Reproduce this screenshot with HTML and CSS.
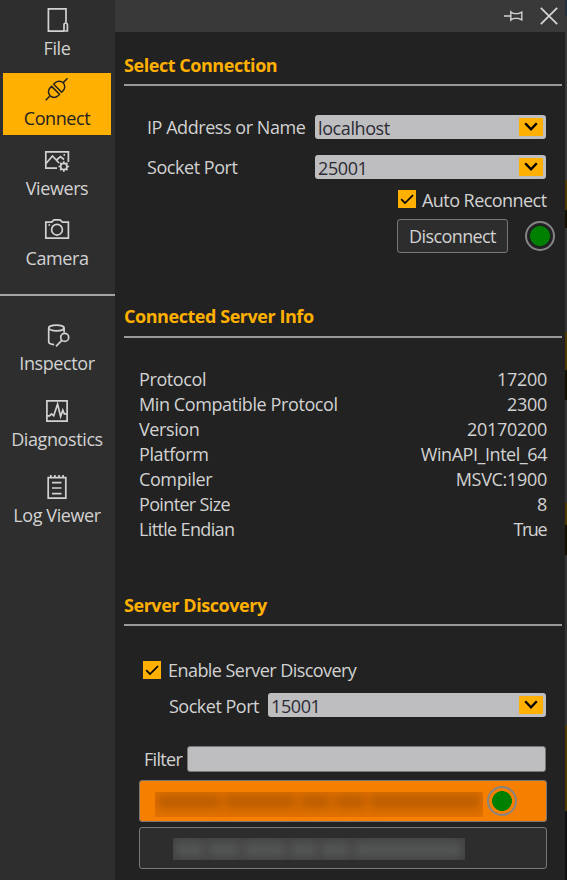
FILE: index.html
```html
<!DOCTYPE html>
<html lang="en">
<head>
<meta charset="utf-8">
<title>Connect</title>
<link rel="stylesheet" href="styles.css">
</head>
<body>
<div class="app">
  <nav class="sidebar">
    <div class="nav-group">
      <a class="nav-item">
        <svg class="icon" viewBox="0 0 30 24"><path d="M24 14.5V.9H6.4v22.2H22"/><path d="M22 23V17q0-2 1.7-2t1.7 2v6z"/></svg>
        <span>File</span>
      </a>
      <a class="nav-item active">
        <svg class="icon" viewBox="0 0 30 24"><g transform="translate(14.6 11.3) rotate(-45)"><path d="M-1.5-5.6V5.6H-3.6A5.6 5.6 0 0 1-3.6-5.6zM1.5-5.6V5.6H3.6A5.6 5.6 0 0 0 3.6-5.6zM-9.4 0H-15.5M9.4 0H15.5"/></g></svg>
        <span>Connect</span>
      </a>
      <a class="nav-item">
        <svg class="icon" viewBox="0 0 30 24"><path d="M26.4 14V3.8H3.8V20.2H15"/><path d="M4 15.5L10.5 8l6.5 7M14.5 12l4-3.5 3.5 3M21.5 6.8h1.5"/><circle cx="21.8" cy="18.5" r="3.2"/><path d="M21.8 15.2v-2M21.8 21.8v2M18.5 18.5h-2M25.1 18.5h2M19.5 16.2l-1.4-1.4M24.1 20.8l1.4 1.4M24.1 16.2l1.4-1.4M19.5 20.8l-1.4 1.4"/></svg>
        <span>Viewers</span>
      </a>
      <a class="nav-item">
        <svg class="icon" viewBox="0 0 30 24"><path d="M3.8 4.1H9.6L12 1.9H18L20.4 4.1H26.4V20.2H3.8z"/><circle cx="15" cy="11.7" r="5.4"/><path d="M6.5 7h1.6"/></svg>
        <span>Camera</span>
      </a>
    </div>
    <div class="nav-group tools">
      <a class="nav-item">
        <svg class="icon" viewBox="0 0 30 24"><ellipse cx="14.4" cy="5" rx="7.7" ry="2.9"/><path d="M6.7 5V19q0 2 5.5 2.7M22.1 5v4.5"/><circle cx="22.7" cy="14.4" r="4"/><path d="M19.8 17.4L14 23.3"/></svg>
        <span>Inspector</span>
      </a>
      <a class="nav-item">
        <svg class="icon" viewBox="0 0 30 24"><path d="M4.9 1.9H25.1V22.1H4.9z"/><path d="M5 16.8h2.5l2-2 2.2 2L15.6 5l3 12.5 2.2-6.3 1.5 3.6H25"/></svg>
        <span>Diagnostics</span>
      </a>
      <a class="nav-item">
        <svg class="icon" viewBox="0 0 30 24"><path d="M6.2 2.6H23.8V23.1H6.2z"/><path d="M10 7.7h9.5M10 13h9.5M10 18.7h9.5M8.8 0v3M12.9 0v3M17 0v3M21.1 0v3"/></svg>
        <span>Log Viewer</span>
      </a>
    </div>
  </nav>

  <main class="panel">
    <header class="panel-bar">
      <svg class="pin" viewBox="0 0 20 12"><path d="M0 6H6.5M6.8 .8V11.2M6.8 2.5L10.5 3.6H14.3L17.8 2V10L14.3 8.4H10.5L6.8 9.5"/></svg>
      <svg class="close" viewBox="0 0 18 18"><path d="M.8.8L17.2 17.2M17.2.8L.8 17.2"/></svg>
    </header>

    <section class="select">
      <h2>Select Connection</h2>
      <div class="connection">
        <label>IP Address or Name</label>
        <div class="combo"><span>localhost</span><i><svg viewBox="0 0 24 18"><path d="M6.2 5.2L12 11.4L17.8 5.2"/></svg></i></div>
        <label>Socket Port</label>
        <div class="combo"><span>25001</span><i><svg viewBox="0 0 24 18"><path d="M6.2 5.2L12 11.4L17.8 5.2"/></svg></i></div>
      </div>
      <div class="check auto"><svg viewBox="0 0 18 18"><path d="M3.2 9.2L7 13L15 5.2"/></svg><span>Auto Reconnect</span></div>
      <div class="actions"><button>Disconnect</button><b class="led"></b></div>
    </section>

    <section class="info">
      <h2>Connected Server Info</h2>
      <dl>
        <dt>Protocol</dt><dd>17200</dd>
        <dt>Min Compatible Protocol</dt><dd>2300</dd>
        <dt>Version</dt><dd>20170200</dd>
        <dt>Platform</dt><dd class="tight">WinAPI_Intel_64</dd>
        <dt>Compiler</dt><dd>MSVC:1900</dd>
        <dt class="tight">Pointer Size</dt><dd>8</dd>
        <dt class="tight">Little Endian</dt><dd class="word">True</dd>
      </dl>
    </section>

    <section class="discovery">
      <h2>Server Discovery</h2>
      <div class="check enable"><svg viewBox="0 0 18 18"><path d="M3.2 9.2L7 13L15 5.2"/></svg><span>Enable Server Discovery</span></div>
      <div class="port">
        <label>Socket Port</label>
        <div class="combo"><span>15001</span><i><svg viewBox="0 0 24 18"><path d="M6.2 5.2L12 11.4L17.8 5.2"/></svg></i></div>
      </div>
      <div class="filter"><label>Filter</label><input type="text"></div>
      <div class="server selected">
        <div class="masked"><u class="w1"></u><u class="w2"></u><u class="w3"></u><u class="w4"></u><u class="w5"></u></div>
        <b class="led"></b>
      </div>
      <div class="server">
        <div class="masked"><u class="v1"></u><u class="v2"></u><u class="v3"></u><u class="v4"></u><u class="v5"></u><u class="v6"></u></div>
      </div>
    </section>
  </main>
  <aside class="edge"></aside>
</div>
</body>
</html>
```
FILE: styles.css
```css
* { box-sizing: border-box; }
body {
  margin: 0;
  background: #222;
  color: #d2d2d2;
  font: 18px/24px "Open Sans", "Noto Sans", sans-serif;
  letter-spacing: -0.4px;
}
.app { display: flex; width: 567px; height: 880px; overflow: hidden; }
svg { display: block; fill: none; stroke: currentColor; }

.sidebar { width: 115px; background: #2e2e2e; }
.nav-group { display: flex; flex-direction: column; gap: 8px; padding: 3px 4px 0 3px; height: 296px; border-bottom: 2px solid #a5a5a5; }
.nav-group.tools { gap: 14px; padding-top: 22px; border: 0; }
.nav-item { flex: none; display: flex; flex-direction: column; align-items: center; gap: 4px; height: 62px; padding-top: 5px; white-space: nowrap; }
.nav-item.active { background: #ffb000; color: #222; }
.icon { width: 30px; height: 24px; stroke-width: 1.7; }
.active .icon { stroke-width: 1.5; }

.panel { width: 450px; background: #222; }
.panel-bar { height: 32px; background: #393939; display: flex; align-items: center; justify-content: flex-end; gap: 16px; padding-right: 7px; }
.pin { width: 20px; height: 12px; stroke-width: 1.4; }
.close { width: 18px; height: 18px; stroke-width: 1.8; }

section { padding: 16px 3px 0 9px; }
.select { height: 252px; }
.info { height: 288px; }
h2 { margin: 0; height: 38px; border-bottom: 2px solid #999; font-size: 18px; line-height: 34px; font-weight: 700; letter-spacing: -0.45px; color: #ffb000; }
.info h2 { line-height: 33px; }

.connection { display: grid; grid-template-columns: 168px 231px; row-gap: 16px; margin: 29px 0 0 23px; }
.combo { height: 24px; padding: 3px; display: flex; align-items: center; justify-content: space-between; background: #bebec0; color: #2b2b35; border-radius: 3px; }
.combo span { padding-top: 2px; letter-spacing: -0.4px; }
.combo i { width: 24px; height: 18px; background: #ffb000; border-radius: 1px; }
.combo svg { width: 24px; height: 18px; stroke: #000; stroke-width: 2.3; }
.connection label { letter-spacing: -0.45px; }
.check { display: flex; align-items: center; gap: 6px; height: 24px; letter-spacing: -0.55px; }
.check svg { width: 18px; height: 18px; background: #ffb000; stroke: #000; stroke-width: 1.7; }
.auto { margin: 8px 0 0 274px; }
.auto span { padding-top: 2px; }
.actions { display: flex; align-items: center; gap: 17px; margin: 8px 0 0 273px; }
button { width: 111px; height: 34px; padding: 0; background: #2d2d2d; border: 1px solid #777; border-radius: 3px; color: inherit; font: inherit; letter-spacing: -0.6px; }
.led { width: 30px; height: 30px; border-radius: 50%; border: 2px solid #858585; background: radial-gradient(circle, #008000 9.6px, transparent 10.2px); }

dl { display: grid; grid-template-columns: auto auto; grid-auto-rows: 25px; line-height: 25px; margin: 29px 15px 0; }
dt, dd { margin: 0; }
dd { text-align: right; letter-spacing: -0.3px; }
dt.tight { letter-spacing: -0.65px; }
dd.tight { letter-spacing: -0.45px; }
dd.word { letter-spacing: -1.5px; padding-right: 1px; }

.enable { margin: 32px 0 0 19px; gap: 7px; }
.port { display: grid; grid-template-columns: 99px 278px; height: 24px; margin: 11px 0 0 45px; }
.port label { padding-top: 1px; letter-spacing: -0.5px; }
.filter { display: grid; grid-template-columns: 43px 359px; align-items: center; margin: 29px 0 0 20px; letter-spacing: -0.7px; }
input { height: 26px; width: 359px; background: #bebec0; border: 1px solid #777; border-radius: 3px; }
.server { display: flex; align-items: center; height: 42px; margin: 5px 15px 0; padding-left: 33px; background: #2d2d2d; border: 1px solid #777; border-radius: 3px; }
.server.selected { margin-top: 8px; padding-left: 15px; gap: 4px; background: #f77f00; }
.masked { position: relative; top: 1px; display: flex; align-items: center; gap: 3px; width: 292px; height: 22px; padding: 0 2px; background: #404040; overflow: hidden; }
.masked u { height: 17px; background: #535454; filter: blur(5px); }
.selected .masked { top: 3px; width: 328px; height: 25px; background: #e27100; padding: 0 2px 5px; }
.selected .masked u { height: 15px; background: #bd5e00; }
.w1 { width: 64px; } .w2 { width: 72px; } .w3 { width: 32px; } .w4 { width: 32px; } .w5 { width: 112px; }
.v1 { width: 30px; } .v2 { width: 32px; } .v3 { width: 44px; } .v4 { width: 28px; } .v5 { width: 30px; } .v6 { width: 108px; }

.edge { width: 2px; background: linear-gradient(#24323f 0 16px, #383838 16px 180px, #4c3700 180px 210px, #151000 210px 228px, #343434 228px 332px, #4c3700 332px 370px, #151000 370px 400px, #343434 400px 503px, #4c3700 503px 525px, #151000 525px 555px, #343434 555px 725px, #4c3700 725px 811px, #111 811px); }
```
